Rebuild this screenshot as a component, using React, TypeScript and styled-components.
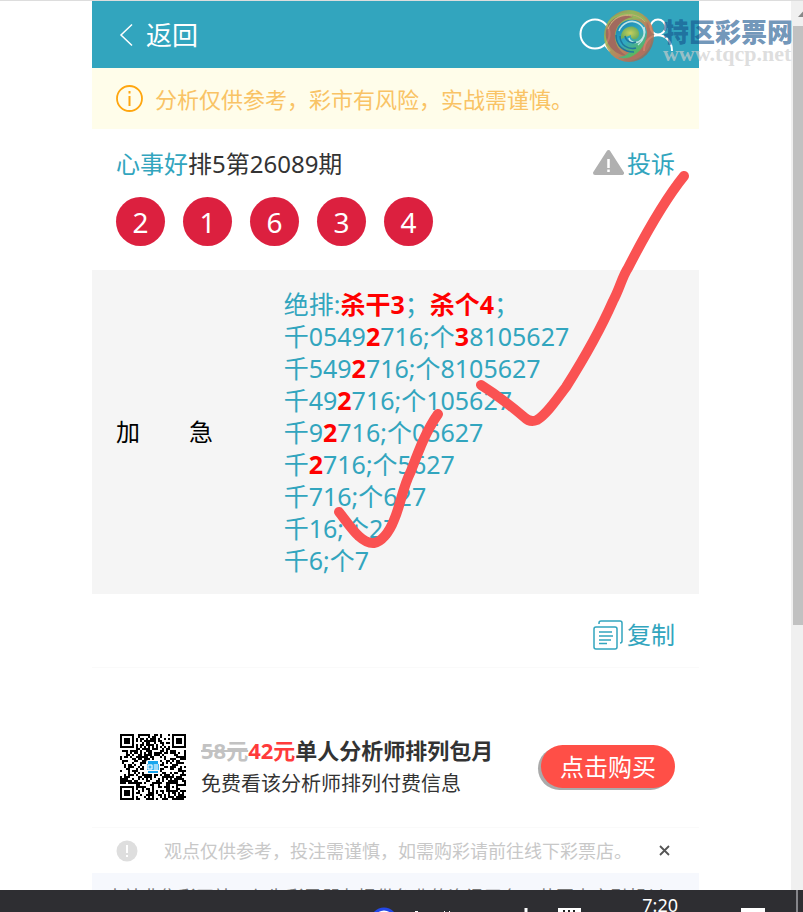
import React from 'react';
import styled, { createGlobalStyle, css } from 'styled-components';

const teal = '#32a5be';
const red = '#ff0000';

const GlobalStyle = createGlobalStyle`
  * { box-sizing: border-box; }
  body {
    margin: 0;
    background: #fff;
    color: #333;
    font-family: "Noto Sans", "Noto Sans CJK SC", sans-serif;
  }
  button { font: inherit; border: 0; padding: 0; background: none; cursor: pointer; }
  a { text-decoration: none; color: inherit; }
  p, h1, ul { margin: 0; padding: 0; }
  svg { display: block; flex: none; }
`;

const Screen = styled.div`
  display: flex;
  flex-direction: column;
  height: 100vh;
  overflow: hidden;
  border-top: 1px solid #ddd;
`;

const Viewport = styled.div`
  position: relative;
  display: flex;
  flex: 1;
  min-height: 0;
`;

const Content = styled.div`
  display: flex;
  flex: 1;
  justify-content: center;
  align-items: flex-start;
  overflow: hidden;
`;

const Column = styled.main`
  position: relative;
  width: 100%;
  max-width: 607px;
`;

const Header = styled.header`
  display: flex;
  justify-content: space-between;
  align-items: center;
  height: 67px;
  padding: 0 24px;
  background: ${teal};
  color: #fff;
`;

const BackLink = styled.a`
  display: flex;
  align-items: center;
  gap: 10px;
  font-size: 26px;
  line-height: 36px;
`;

const HeaderActions = styled.div`
  display: flex;
  gap: 32px;
`;

const IconButton = styled.button`
  color: inherit;
`;

const Warning = styled.p`
  display: flex;
  align-items: center;
  gap: 12px;
  height: 61px;
  padding: 0 24px;
  background: #fffdea;
  color: #f9c365;
  font-size: 22px;
  line-height: 32px;
`;

const Issue = styled.section`
  padding: 17px 24px 24px;
`;

const Row = styled.div`
  display: flex;
  align-items: center;
  justify-content: space-between;
`;

const Title = styled.h1`
  font-size: 24px;
  font-weight: 400;
  line-height: 36px;
`;

const Author = styled.a`
  color: ${teal};
`;

const TextAction = styled.button`
  display: flex;
  align-items: center;
  gap: 3px;
  color: ${teal};
  font-size: 24px;
  line-height: 36px;
`;

const Balls = styled.ul`
  display: flex;
  gap: 18px;
  margin-top: 15px;
  list-style: none;
`;

const Ball = styled.li`
  display: flex;
  align-items: center;
  justify-content: center;
  width: 49px;
  height: 49px;
  border-radius: 50%;
  background: #dc203f;
  color: #fff;
  font-size: 28px;
  line-height: 48px;
`;

const Analysis = styled.section`
  display: flex;
  align-items: center;
  padding: 18px 24px;
  background: #f5f5f5;
`;

const Level = styled.div`
  display: flex;
  gap: 49px;
  width: 30%;
  color: #000;
  font-size: 24px;
  line-height: 32px;
`;

const Lines = styled.div`
  flex: 1;
  color: ${teal};
  font-size: 25px;
  line-height: 32px;
  white-space: nowrap;
`;

const Hit = styled.b`
  color: ${red};
`;

const CopyBar = styled.div`
  display: flex;
  justify-content: flex-end;
  align-items: center;
  height: 74px;
  padding: 8px 24px 0;
  border-bottom: 1px solid #fafafa;
`;

const Promo = styled.section`
  display: flex;
  align-items: center;
  height: 160px;
  padding: 38px 24px 0 28px;
  border-bottom: 1px solid #fafafa;
`;

const PromoText = styled.div`
  flex: 1;
  padding-left: 15px;
  white-space: nowrap;
`;

const PromoTitle = styled.p`
  font-size: 22px;
  font-weight: 700;
  line-height: 34px;
`;

const OldPrice = styled.del`
  color: #c2c2c2;
`;

const Price = styled.span`
  color: #ff3b3b;
`;

const PromoNote = styled.p`
  font-size: 20px;
  line-height: 34px;
`;

const BuyButton = styled.button`
  width: 134px;
  height: 43px;
  border-radius: 22px;
  background: #ff4f47;
  box-shadow: -3px 2px 0 #aaa;
  color: #fff;
  font-size: 24px;
  line-height: 42px;
`;

const Notice = styled.div`
  display: flex;
  align-items: center;
  height: 45px;
  padding: 0 24px;
  color: #c8c8c8;
  font-size: 18px;
  line-height: 26px;
`;

const NoticeText = styled.p`
  flex: 1;
  padding-left: 26px;
  white-space: nowrap;
`;

const CloseButton = styled.button`
  padding: 5px;
`;

const Footer = styled.footer`
  height: 40px;
  padding: 12px 14px;
  overflow: hidden;
  background: #f6f8fd;
  color: #777;
  font-size: 18px;
  line-height: 24px;
  white-space: nowrap;
`;

const Scrollbar = styled.div`
  width: 12px;
  padding-left: 2px;
  overflow: hidden;
  background: #f0f0f0;
`;

const Thumb = styled.div`
  height: 67.4%;
  background: #c1c1c1;
`;

const overlay = css`
  position: absolute;
  pointer-events: none;
`;

const Marks = styled.svg`
  ${overlay}
  top: 0;
  left: 0;
`;

const Watermark = styled.div`
  ${overlay}
  top: 8px;
  right: 10px;
  display: flex;
  gap: 8px;
`;

const WatermarkName = styled.div`
  color: rgba(20, 82, 140, 0.62);
  font-family: "Noto Sans CJK SC", sans-serif;
  font-size: 26px;
  font-weight: 900;
  line-height: 30px;
  padding-top: 7px;
`;

const WatermarkUrl = styled.div`
  color: rgba(205, 205, 205, 0.68);
  font-family: "Liberation Serif", serif;
  font-size: 22px;
  font-weight: 700;
  line-height: 16px;
`;

const Taskbar = styled.div`
  display: flex;
  height: 22px;
  overflow: hidden;
  justify-content: flex-end;
  background: #2e2e32;
  color: #fff;
`;

const Tray = styled.div`
  display: flex;
  align-items: flex-start;
`;

const Clock = styled.time`
  padding: 3px 63px 0 59px;
  font-size: 18px;
  line-height: 24px;
`;

const ShowDesktop = styled.div`
  width: 7px;
  height: 22px;
  margin-left: 31px;
  border-left: 2px solid #85858a;
`;

const BackIcon = () => (
  <svg width="20" height="24" viewBox="0 0 20 24" fill="none" stroke="#fff" strokeWidth="1.5">
    <path d="M16 1.5 5 12l11 10.500" />
  </svg>
);

const SearchIcon = () => (
  <svg width="32" height="38" viewBox="0 0 32 38" fill="none" stroke="#fff" strokeWidth="2">
    <circle cx="16" cy="18" r="14.500" />
    <path d="m26 29 5 6" />
  </svg>
);

const UserIcon = () => (
  <svg width="32" height="38" viewBox="0 0 32 38" fill="none" stroke="#fff" strokeWidth="2">
    <circle cx="15" cy="11" r="7.500" />
    <path d="M1 35C1 14 29 14 29 35" />
  </svg>
);

const InfoIcon = () => (
  <svg width="27" height="27" viewBox="0 0 27 27" fill="none" stroke="#ffa60f" strokeWidth="1.800">
    <circle cx="13.500" cy="13.500" r="12.500" />
    <path d="M13.500 11v10M13.500 6v2.500" strokeWidth="2" />
  </svg>
);

const AlertIcon = () => (
  <svg width="31" height="30" viewBox="0 0 31 30">
    <path d="M15.500 3 29 24H2Z" fill="#b0b0b0" stroke="#b0b0b0" strokeWidth="4" strokeLinejoin="round" />
    <path d="M15.500 10v9M15.500 20.500v2.500" stroke="#fff" strokeWidth="2.500" />
  </svg>
);

const CopyIcon = () => (
  <svg width="31" height="30" viewBox="0 0 31 30" fill="none" stroke={teal} strokeWidth="1.500">
    <rect x="1" y="7" width="23" height="22" rx="2" />
    <path d="M6 4V3q0-2 2-2h19q2 0 2 2v18q0 2-2 2" />
    <path d="M6 12h13M6 16h14M6 20h12M6 23.500h8" />
  </svg>
);

const BangIcon = () => (
  <svg width="22" height="22" viewBox="0 0 22 22">
    <circle cx="11" cy="11" r="10.500" fill="#dedede" />
    <path d="M11 5v8M11 15v2" stroke="#fff" strokeWidth="2" />
  </svg>
);

const CloseIcon = () => (
  <svg width="11" height="11" viewBox="0 0 11 11" stroke="#555" strokeWidth="1.800">
    <path d="m1 1 9 9M10 1l-9 9" />
  </svg>
);

const SIZE = 33;

const finderCell = (x: number, y: number) => {
  const edge = Math.max(Math.abs(x - 3), Math.abs(y - 3));
  return edge === 3 || edge <= 1;
};

const isDark = (x: number, y: number) => {
  if (x < 8 && y < 8) return x < 7 && y < 7 && finderCell(x, y);
  if (x > 24 && y < 8) return x > 25 && y < 7 && finderCell(x - 26, y);
  if (x < 8 && y > 24) return x < 7 && y > 25 && finderCell(x, y - 26);
  if (Math.abs(x - 26) <= 2 && Math.abs(y - 26) <= 2) {
    return Math.max(Math.abs(x - 26), Math.abs(y - 26)) !== 1;
  }
  if (y === 6) return x % 2 === 0;
  if (x === 6) return y % 2 === 0;
  let n = (x * 374761 + y * 668265 + x * y * 977) >>> 0;
  n = Math.imul(n ^ (n >>> 13), 1274126177) >>> 0;
  return ((n ^ (n >>> 16)) & 1) === 1;
};

const qrPath = Array.from({ length: SIZE * SIZE }, (_, i) => [i % SIZE, Math.floor(i / SIZE)])
  .filter(([x, y]) => isDark(x, y))
  .map(([x, y]) => `M${x * 2} ${y * 2}h2v2h-2z`)
  .join('');

const QrCode = () => (
  <svg width="66" height="66" viewBox="0 0 66 66" role="img" aria-label="二维码">
    <path d={qrPath} fill="#000" shapeRendering="crispEdges" />
    <rect x="26" y="26" width="14" height="14" rx="2" fill="#fff" />
    <path d="M28 27h10v3H28zM28 37h10v2H28z" fill="#18a5ee" />
    <rect x="27" y="30" width="12" height="6" fill="#42b6f2" />
    <path d="M28 31h4v4h-4zM34 31h4M34 33h4M34 35h4" stroke="#fff" fill="none" />
  </svg>
);

const SwirlLogo = () => (
  <svg width="52" height="54" viewBox="0 0 52 54" fill="none" opacity="0.85">
    <defs>
      <linearGradient id="ring" x1="0" y1="0" x2="1" y2="1">
        <stop offset="0" stopColor="#c46a50" />
        <stop offset="0.300" stopColor="#a2b84c" />
        <stop offset="0.600" stopColor="#d5784e" />
        <stop offset="1" stopColor="#6a645f" />
      </linearGradient>
      <linearGradient id="core" x1="0" y1="0" x2="0.600" y2="1">
        <stop offset="0" stopColor="#1578ab" />
        <stop offset="0.550" stopColor="#2fa9c6" />
        <stop offset="1" stopColor="#6fbf35" />
      </linearGradient>
      <radialGradient id="eye">
        <stop offset="0" stopColor="#e3d84c" />
        <stop offset="1" stopColor="#7fb04a" />
      </radialGradient>
    </defs>
    <ellipse cx="26" cy="27" rx="25" ry="26" fill="url(#ring)" />
    <path d="M5 13C14 1 36 0 45 13 34 7 22 9 16 17 11 24 12 33 16 39 5 34 1 23 5 13Z" fill="#a3b94a" />
    <path d="M3 22C6 8 20 4 30 8 18 10 12 18 12 27c0 9 5 16 12 20C11 46 1 34 3 22Z" fill="#b5604e" />
    <path d="M14 20C19 9 34 8 41 16c6 8 4 20-4 27-6 5-16 8-22 5 6 0 10-3 12-6-12-3-17-13-13-22Z" fill="url(#core)" />
    <path d="M44 13c8 13 6 30-11 37-5 2-10 2-13 1 14-3 23-14 24-26 0-5-1-9 0-12Z" fill="#c4694f" />
    <path d="M35 36c6-5 8-12 6-18M16 22c3-8 12-12 19-8 7 4 8 12 3 17-4 4-11 3-12-2" stroke="#d8f0ee" strokeWidth="1.500" />
    <path d="M18 30c-1-8 6-14 13-12 6 2 7 9 2 12-3 1-6-1-5-4" fill="url(#eye)" />
    <path d="M17 27c0 9 8 14 16 12M13 26c0 11 8 17 18 17M22 27c1 5 6 8 11 6" stroke="#1d6f98" strokeWidth="1.500" />
    <path d="M8 14C17 3 34 3 42 13M5 20C10 8 20 5 29 7" stroke="#e0b069" strokeWidth="1" />
  </svg>
);

const ScrollArrow = () => (
  <svg width="10" height="25" viewBox="0 0 10 25">
    <path d="M5 16 10 10.500V16Z" fill="#888" />
  </svg>
);

const TrayIcons = () => (
  <svg width="214" height="22" viewBox="0 0 214 22">
    <circle cx="15" cy="31" r="12" fill="#fff" stroke="#2448e8" strokeWidth="3" />
    <path d="M46 21.500h3M75 21.500h1M80 21.500h1" stroke="#fff" strokeWidth="1" />
    <path d="M157 18v4" stroke="#fff" strokeWidth="3" />
    <rect x="189" y="18" width="23" height="8" fill="#fff" />
    <path d="M194 21h2M199 21h2M204 21h2" stroke="#222" strokeWidth="2" />
  </svg>
);

const NoteIcon = () => (
  <svg width="24" height="22" viewBox="0 0 24 22">
    <rect y="18" width="24" height="4" fill="#fff" />
  </svg>
);

type Line = [before: string, hit: string, middle: string, secondHit: string, after: string];

const lines: Line[] = [
  ['绝排:', '杀干3', '；', '杀个4', '；'],
  ['千0549', '2', '716;个', '3', '8105627'],
  ['千549', '2', '716;个8105627', '', ''],
  ['千49', '2', '716;个105627', '', ''],
  ['千9', '2', '716;个05627', '', ''],
  ['千', '2', '716;个5627', '', ''],
  ['千716;个627', '', '', '', ''],
  ['千16;个27', '', '', '', ''],
  ['千6;个7', '', '', '', ''],
];

export default function App() {
  return (
    <Screen>
      <GlobalStyle />
      <Viewport>
        <Content>
          <Column>
            <Header>
              <BackLink href="#back"><BackIcon />返回</BackLink>
              <HeaderActions>
                <IconButton aria-label="搜索"><SearchIcon /></IconButton>
                <IconButton aria-label="我的"><UserIcon /></IconButton>
              </HeaderActions>
            </Header>
            <Warning><InfoIcon />分析仅供参考，彩市有风险，实战需谨慎。</Warning>
            <Issue>
              <Row>
                <Title><Author href="#author">心事好</Author>排5第26089期</Title>
                <TextAction><AlertIcon />投诉</TextAction>
              </Row>
              <Balls>
                {[2, 1, 6, 3, 4].map((n) => <Ball key={n}>{n}</Ball>)}
              </Balls>
            </Issue>
            <Analysis>
              <Level><span>加</span><span>急</span></Level>
              <Lines>
                {lines.map(([before, hit, middle, secondHit, after]) => (
                  <p key={before}>
                    {before}<Hit>{hit}</Hit>{middle}<Hit>{secondHit}</Hit>{after}
                  </p>
                ))}
              </Lines>
            </Analysis>
            <CopyBar>
              <TextAction><CopyIcon />复制</TextAction>
            </CopyBar>
            <Promo>
              <QrCode />
              <PromoText>
                <PromoTitle><OldPrice>58元</OldPrice><Price>42元</Price>单人分析师排列包月</PromoTitle>
                <PromoNote>免费看该分析师排列付费信息</PromoNote>
              </PromoText>
              <BuyButton>点击购买</BuyButton>
            </Promo>
            <Notice>
              <BangIcon />
              <NoticeText>观点仅供参考，投注需谨慎，如需购彩请前往线下彩票店。</NoticeText>
              <CloseButton aria-label="关闭"><CloseIcon /></CloseButton>
            </Notice>
            <Footer>本站非售彩网站，仅为彩民朋友提供免费的资讯平台，若因内容引起纠</Footer>
            <Marks width="607" height="560" viewBox="0 0 607 560" fill="none" stroke="#fa5252" strokeWidth="10" strokeLinecap="round" strokeLinejoin="round">
              <path d="M592 175C575 196 555 230 536 267C530 276 528 287 521 300C510 325 493 356 474 386C464 399 455 413 445 419Q438 422 432 416C419 405 405 394 389 384" />
              <path d="M346 413C334 430 327 449 319 470C310 488 309 503 302 519C297 532 289 541 282 542C269 543 259 526 247 511" />
            </Marks>
          </Column>
        </Content>
        <Scrollbar><ScrollArrow /><Thumb /></Scrollbar>
        <Watermark>
          <SwirlLogo />
          <div>
            <WatermarkName>特区彩票网</WatermarkName>
            <WatermarkUrl>www.tqcp.net</WatermarkUrl>
          </div>
        </Watermark>
      </Viewport>
      <Taskbar>
        <Tray>
          <TrayIcons />
          <Clock>7:20</Clock>
          <NoteIcon />
          <ShowDesktop />
        </Tray>
      </Taskbar>
    </Screen>
  );
}
